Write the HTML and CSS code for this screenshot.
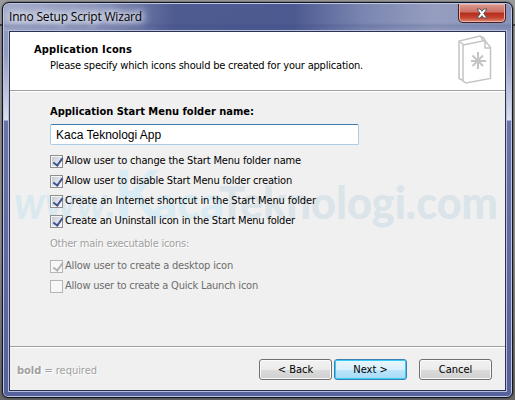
FILE: index.html
```html
<!DOCTYPE html>
<html lang="en">
<head>
<meta charset="utf-8">
<title>Inno Setup Script Wizard</title>
<link rel="stylesheet" href="styles.css">
</head>
<body>
<div class="window">
  <div class="titlebar">
    <span class="title">Inno Setup Script Wizard</span>
    <button class="close" aria-label="Close"><svg width="12" height="11" viewBox="0 0 12 11"><path d="M1 1h3.200L6 3.300 7.800 1H11L7.700 5.500 11 10H7.800L6 7.700 4.200 10H1l3.300-4.500z" fill="#fff" stroke="#53545f" stroke-width="1"/></svg></button>
  </div>
  <div class="client">
    <header class="header">
      <div>
        <h1>Application Icons</h1>
        <p class="subtitle">Please specify which icons should be created for your application.</p>
      </div>
      <svg class="docs" width="34" height="50" viewBox="0 0 34 50" fill="none" stroke="#c4c4c4" stroke-width="1.5">
        <path d="M5 45.500 1 43.500V6L22 1l4 2 1 4M2 7l4 3"/>
        <path d="M5 10 27 5.500l5.500 7V43.500L8 48l-3-2z"/>
        <path d="M27 6v7h5.500M23 2l2 4"/>
        <path d="M20 17v17M13 26h15M14.500 20.500l10.500 10.500M25 20.500 14.500 31" stroke-width="2"/>
      </svg>
    </header>
    <main class="content">
      <svg class="watermark" width="492" height="78" viewBox="0 0 492 78">
        <text class="wm-www" x="4" y="57" textLength="102" lengthAdjust="spacingAndGlyphs">www.</text>
        <text class="wm-kaca"><tspan class="wm-k" x="104" y="57">K</tspan><tspan x="143" y="57" textLength="71" lengthAdjust="spacingAndGlyphs">aca</tspan></text>
        <text class="wm-tek" x="209" y="57" textLength="279" lengthAdjust="spacingAndGlyphs">Teknologi.com</text>
      </svg>
      <label class="field-label">Application Start Menu folder name:</label>
      <div class="field">Kaca Teknologi App</div>
      <div class="options">
        <div class="option"><span class="box on"></span><span class="t1">Allow user to change the Start Menu folder name</span></div>
        <div class="option"><span class="box on"></span><span class="t2">Allow user to disable Start Menu folder creation</span></div>
        <div class="option"><span class="box on"></span><span class="t3">Create an Internet shortcut in the Start Menu folder</span></div>
        <div class="option"><span class="box on"></span><span class="t4">Create an Uninstall icon in the Start Menu folder</span></div>
      </div>
      <p class="group">Other main executable icons:</p>
      <div class="options disabled">
        <div class="option"><span class="box on"></span><span class="t5">Allow user to create a desktop icon</span></div>
        <div class="option"><span class="box"></span><span class="t6">Allow user to create a Quick Launch icon</span></div>
      </div>
    </main>
    <footer class="footer">
      <p class="hint"><b>bold</b> = required</p>
      <button class="btn">&lt; Back</button>
      <button class="btn primary">Next &gt;</button>
      <button class="btn cancel">Cancel</button>
    </footer>
  </div>
</div>
<script src="script.js"></script>
</body>
</html>
```
FILE: styles.css
```css
* { box-sizing: border-box; }
body {
  margin: 0; width: 515px; height: 400px; overflow: hidden; padding: 2px;
  background: linear-gradient(#9b9b9b 0 24px, #444 24px 26px, #929292 26px 60%, #666);
  font: 11px/14px "DejaVu Sans Condensed", "DejaVu Sans", sans-serif; font-stretch: condensed; color: #000;
}
h1, p { margin: 0; }
button { font: inherit; padding: 0; color: inherit; }
.window {
  width: 511px; height: 396px; padding: 0 6px 6px; border: 1px solid #111522; border-radius: 7px 7px 6px 6px;
  box-shadow: inset 0 0 0 1px #bfc6e4, 0 0 2px #222;
  background: linear-gradient(#8f99bd 0, #929bc1 50px, #dddfed 117px, #6a74a8 118px, #54619a 100%);
}
.titlebar {
  height: 27px; margin: 1px -5px 0; padding: 0 5px; display: flex; justify-content: space-between; border-radius: 5px 5px 0 0;
  background: linear-gradient(transparent 70%, #34427b33 80%, transparent), linear-gradient(90deg, #a3abc9, #8f98bd 90px, #4e5b91 170px, #4d5a91 290px, #7b86b0 360px, #969ec0 430px, #8993ba);
}
.title {
  font: 12px/26px "Open Sans", sans-serif; padding-right: 6px; align-self: flex-start; white-space: nowrap;
  text-shadow: 0 0 6px #fff, 0 0 8px #fff, 0 0 10px #dfe4f4, 0 0 12px #ccd3ea;
}
.close {
  width: 48px; height: 19px; margin: 0; border: 1px solid #4a1c24; border-top: 0; border-radius: 0 0 5px 5px;
  display: flex; justify-content: center; align-items: center; box-shadow: inset 0 0 0 1px #eab3a9;
  background: linear-gradient(#d99a90, #cf6f63 45%, #b52c1d 50%, #c3432f 75%, #dd8a74);
}
.client { height: 360px; border: 1px solid #2b3252; outline: 1px solid #b7bedb; background: #f0f0f0; display: flex; flex-direction: column; }
.header { height: 59px; flex: none; background: #fff; border-bottom: 1px solid #a0a0a0; padding: 10px 13px 0 24px; display: flex; justify-content: space-between; }
h1 { font-size: 11px; line-height: 15px; }
.subtitle { padding: 2px 0 0 16px; white-space: nowrap; }
.docs { margin-top: -7px; }
.content { position: relative; flex: 1; padding: 12px 40px 0; border-top: 1px solid #fff; }
.content > :not(.watermark) { position: relative; }
.watermark { position: absolute; left: 0; top: 70px; font: 900 46px Lato, sans-serif; overflow: visible; }
.wm-www { fill: #dae8ef; font-style: italic; font-weight: 700; }
.wm-tek { fill: #dae4e9; }
.wm-kaca { fill: #d9ebf3; }
.wm-k { font-size: 66px; font-weight: 700; }
.field-label { display: block; width: max-content; font-weight: 700; line-height: 15px; white-space: nowrap; }
.field {
  width: 309px; height: 21px; margin: 5px 0 6px; padding: 0 5px; background: #fff; border: 1px solid #abcde8; border-top-color: #3d7bad;
  border-radius: 2px; font: 12px/20px "Liberation Sans", sans-serif;
}
.option { display: flex; gap: 2px; align-items: center; height: 20px; white-space: nowrap; }
.box { width: 13px; height: 13px; border: 1px solid #8e8f8f; background: linear-gradient(135deg, #c5cad1, #f4f5f7) content-box, #f5f5f5; padding: 1px; position: relative; }
.box.on::after { content: ""; position: absolute; left: 4px; top: 0; width: 4px; height: 8px; border: solid #3e5291; border-width: 0 2px 2px 0; transform: rotate(36deg); }
.group { line-height: 14px; margin: 6px 0 5px; color: #a0a0a0; text-shadow: 1px 1px #fff; width: max-content; }
.disabled { color: #6d6d6d; }
.disabled .box { border-color: #b5b5b5; background: #f7f7f7; }
.disabled .box.on::after { border-color: #b3b3b3; }
.footer { height: 44px; flex: none; border-top: 1px solid #a0a0a0; box-shadow: inset 0 1px #fff; display: flex; padding: 12px 13px 0 7px; }
.hint { margin: 5px auto 0 0; color: #a0a0a0; text-shadow: 1px 1px #fff; width: max-content; }
.btn { width: 73px; height: 21px; margin-left: 2px; border: 1px solid #707070; border-radius: 3px; box-shadow: inset 0 0 0 1px #fafafa; background: linear-gradient(#f2f2f2, #ebebeb 50%, #dcdcdc 50%, #cfcfcf); line-height: 18px; }
.primary { border-color: #3c7fb1; box-shadow: inset 0 0 0 1px #35ccf8; background: linear-gradient(#eaf6fd, #d9f0fc 50%, #bee6fd 50%, #a7d9f5); }
.cancel { margin-left: 12px; }
```
FILE: script.js
```js
const widths = {
  '.title': 133, 'h1': 98, '.subtitle': 313, '.field-label': 204,
  '.t1': 236, '.t2': 227, '.t3': 251, '.t4': 230, '.t5': 168, '.t6': 193,
  '.group': 139, '.hint': 80
};
for (const [selector, width] of Object.entries(widths)) {
  const el = document.querySelector(selector);
  const range = document.createRange();
  range.selectNodeContents(el);
  el.style.letterSpacing = '0px';
  el.style.letterSpacing = (width - range.getBoundingClientRect().width) / el.textContent.length + 'px';
}
```
